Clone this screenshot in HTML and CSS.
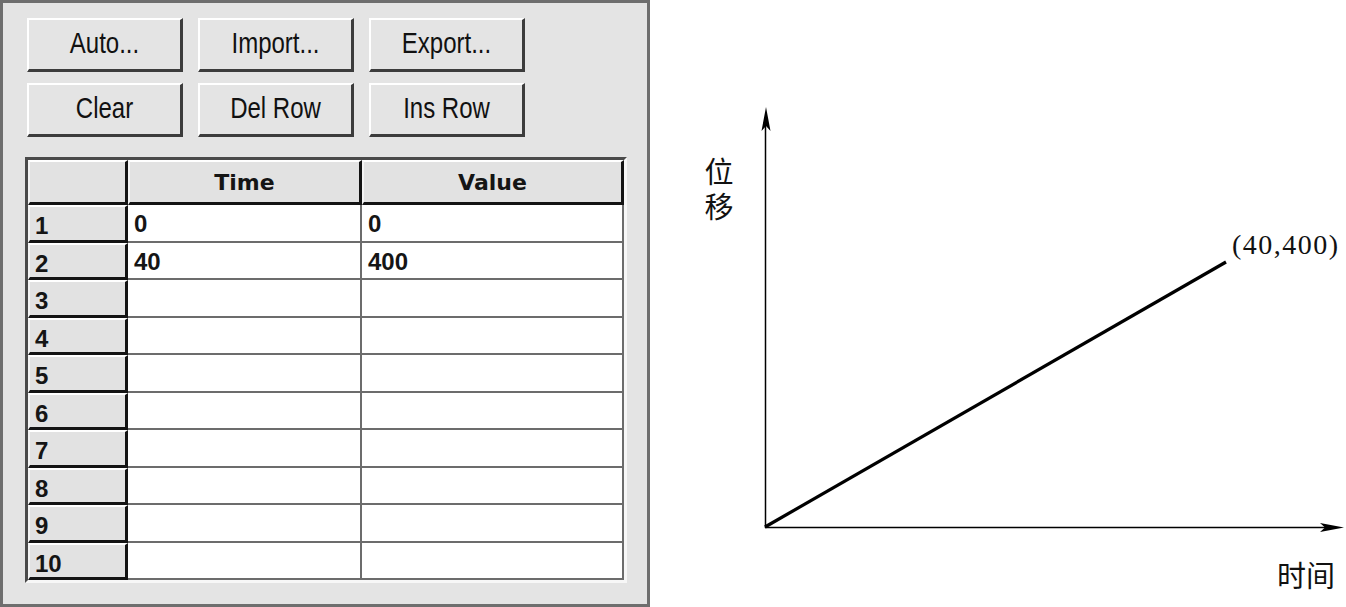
FILE: index.html
```html
<!DOCTYPE html>
<html>
<head>
<meta charset="utf-8">
<link rel="stylesheet" href="styles.css">
</head>
<body>
<div class="page">
  <div class="panel">
    <div class="buttons">
      <button class="btn"><span>Auto...</span></button>
      <button class="btn"><span>Import...</span></button>
      <button class="btn"><span>Export...</span></button>
      <button class="btn"><span>Clear</span></button>
      <button class="btn"><span>Del Row</span></button>
      <button class="btn"><span>Ins Row</span></button>
    </div>
    <div class="frame">
      <div class="grid">
        <div class="hd"></div>
        <div class="hd">Time</div>
        <div class="hd">Value</div>

        <div class="rh">1</div><div class="cell">0</div><div class="cell">0</div>
        <div class="rh">2</div><div class="cell">40</div><div class="cell">400</div>
        <div class="rh">3</div><div class="cell"></div><div class="cell"></div>
        <div class="rh">4</div><div class="cell"></div><div class="cell"></div>
        <div class="rh">5</div><div class="cell"></div><div class="cell"></div>
        <div class="rh">6</div><div class="cell"></div><div class="cell"></div>
        <div class="rh">7</div><div class="cell"></div><div class="cell"></div>
        <div class="rh">8</div><div class="cell"></div><div class="cell"></div>
        <div class="rh">9</div><div class="cell"></div><div class="cell"></div>
        <div class="rh">10</div><div class="cell"></div><div class="cell"></div>
      </div>
    </div>
  </div>
  <div class="chart">
    <svg width="696" height="607" viewBox="0 0 696 607">
      <line x1="115.5" y1="125" x2="115.5" y2="528" stroke="#000" stroke-width="1.5"/>
      <polygon points="116,107 111.5,131 116,126 120.5,131" fill="#000"/>
      <line x1="115" y1="527.5" x2="676" y2="527.5" stroke="#000" stroke-width="1.5"/>
      <polygon points="694,527.5 670,523 675,527.5 670,532" fill="#000"/>
      <line x1="115" y1="527" x2="576" y2="262" stroke="#000" stroke-width="3.2"/>
      <text class="coord" x="582" y="254">(40,400)</text>
      <text class="cjk vert" x="69" y="157">位移</text>
      <text class="cjk" x="627" y="587">时间</text>
    </svg>
  </div>
</div>
</body>
</html>
```
FILE: styles.css
```css
html, body {
  margin: 0;
  padding: 0;
  background: #ffffff;
}

.page {
  display: flex;
  width: 1346px;
  height: 607px;
}

.panel {
  box-sizing: border-box;
  width: 650px;
  height: 607px;
  flex: none;
  background: #e4e4e4;
  border: 3px solid #6e6e6e;
  padding: 15px 0 0 22px;
}

.buttons {
  display: grid;
  grid-template-columns: repeat(3, 156px);
  grid-template-rows: 54px 54px;
  column-gap: 15px;
  row-gap: 11px;
  padding-left: 2px;
}

.btn {
  box-sizing: border-box;
  margin: 0;
  padding: 0 0 4px 0;
  background: #e4e4e4;
  border-top: 2px solid #ffffff;
  border-left: 2px solid #ffffff;
  border-right: 3px solid #3c3c3c;
  border-bottom: 3px solid #3c3c3c;
  font-family: "Liberation Sans", Arial, sans-serif;
  font-size: 24px;
  color: #111;
  display: flex;
  align-items: center;
  justify-content: center;
}

.btn span {
  display: inline-block;
  transform: scaleY(1.25);
}

.frame {
  margin-top: 20px;
  width: 596px;
  border-top: 3px solid #4a4a4a;
  border-left: 3px solid #4a4a4a;
  border-right: 3px solid #f7f7f7;
  border-bottom: 3px solid #f7f7f7;
}

.grid {
  display: grid;
  grid-template-columns: 100px 234px 262px;
  grid-template-rows: 45px repeat(10, 37.5px);
  background: #ffffff;
}

.hd, .rh {
  box-sizing: border-box;
  background: #e2e2e2;
  border-top: 2px solid #ffffff;
  border-left: 2px solid #f4f4f4;
  border-right: 3px solid #141414;
  border-bottom: 3px solid #141414;
  font-weight: bold;
  color: #151515;
}

.hd {
  font-family: "DejaVu Sans", sans-serif;
  font-size: 22px;
  display: flex;
  align-items: center;
  justify-content: center;
  padding-top: 1px;
}

.rh {
  font-family: "Liberation Sans", Arial, sans-serif;
  font-size: 24px;
  display: flex;
  align-items: center;
  padding: 6px 0 0 5px;
}

.cell {
  box-sizing: border-box;
  background: #ffffff;
  border-right: 2px solid #6c6c6c;
  border-bottom: 2px solid #6c6c6c;
  font-family: "Liberation Sans", Arial, sans-serif;
  font-weight: bold;
  font-size: 24px;
  color: #151515;
  display: flex;
  align-items: center;
  padding: 3px 0 0 6px;
}

.chart {
  flex: none;
  width: 696px;
  height: 607px;
}

.chart svg {
  display: block;
}

.coord {
  font-family: "Liberation Serif", "Times New Roman", serif;
  font-size: 28px;
  letter-spacing: 1.5px;
  fill: #111;
}

.cjk {
  font-family: "Noto Sans CJK SC", sans-serif;
  font-size: 29px;
  fill: #111;
}

.vert {
  writing-mode: vertical-rl;
  letter-spacing: 6px;
}
```
